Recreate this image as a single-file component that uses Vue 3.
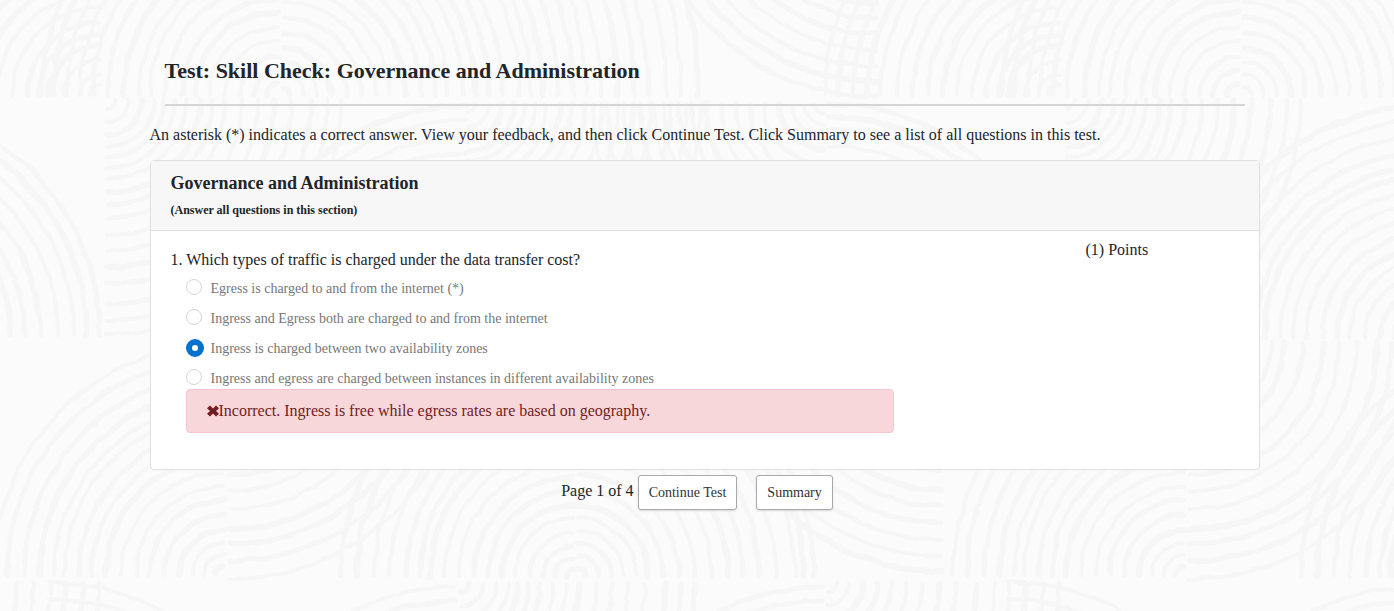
<script setup>
import { ref } from 'vue'

const selected = ref(2)
const options = [
  'Egress is charged to and from the internet (*)',
  'Ingress and Egress both are charged to and from the internet',
  'Ingress is charged between two availability zones',
  'Ingress and egress are charged between instances in different availability zones'
]

// Quarter fans of the backdrop tile: centre, horizontal and vertical direction, ring radii.
const TILE = 960
const small = [8, 22, 35, 47, 57, 68, 79, 93, 105, 118, 135, 151, 167, 184, 204, 220, 234]
const even = [9, 20, 32, 45, 60, 75, 88, 103, 118, 132, 145, 160, 170, 184, 200, 217, 231]
const wide = [7, 20, 33, 47, 62, 77, 92, 106, 121, 137, 151, 164, 179, 192, 205, 219, 236, 247, 259, 274, 289, 302, 317, 334, 351, 364, 382, 397, 414]
const left = [11, 24, 38, 54, 68, 83, 96, 113, 128, 139, 154, 171, 185, 198, 211, 224, 236]
const outer = [12, 27, 43, 57, 70, 81, 94, 113, 129, 148, 164, 181, 198, 214, 229]
const lower = [12, 25, 38, 52, 66, 81, 94, 113, 133, 149, 167, 187, 202, 219, 237]
const fans = [
  [278, 95, -1, -1, left],
  [284, 95, 1, -1, wide],
  [99, 95, -1, -1, [10, 20, 35, 50, 60, 72, 87, 102, 116, 131, 146, 162, 179, 191, 206, 221, 234]],
  [876, -134, -1, 1, [60, 85, 105, 122, 137, 152, 168, 184, 200, 215, 231]],
  [107, 100, 1, 1, small],
  [465, 337, -1, -1, even],
  [467, 104, 1, 1, small],
  [824, 104, -1, 1, even],
  [829, 335, 1, -1, [12, 27, 43, 60, 76, 92, 109, 125, 142, 156, 172, 189, 205, 218, 231]],
  [224, 575, -1, -1, even],
  [230, 342, 1, 1, lower],
  [573, 576, -1, -1, [7, 18, 30, 43, 58, 71, 85, 99, 114, 129, 143, 153, 167, 183, 199, 216, 232]],
  [578, 576, 1, -1, [7, 20, 33, 46, 58, 70, 85, 101, 117, 134, 150, 165, 181, 198, 217, 226, 236]],
  [941, 342, -1, 1, outer],
  [48, 820, 1, -1, [170, 188, 205, 221, 238]],
  [827, 583, 1, 1, [9, 22, 36, 51, 65, 80, 95, 113, 129, 150, 167, 183, 199, 216, 232]],
  [455, 817, -1, -1, [170, 185, 200, 216, 230]],
  [461, 584, 1, 1, small],
  [822, 817, -1, -1, [170, 185, 200, 216, 230]]
]

const strokes = []
for (const shift of [-TILE, 0, TILE]) {
  for (const [cx, cy, dx, dy, radii] of fans) {
    radii.forEach((r, i) => {
      const x = cx + shift
      const sweep = dx * dy > 0 ? 1 : 0
      strokes.push({
        d: `M${x + dx * r} ${cy}A${r} ${r} 0 0 ${sweep} ${x} ${cy + dy * r}`,
        w: [4, 5, 4, 6, 5][(i * 3 + Math.abs(cx)) % 5]
      })
    })
  }
}
</script>

<template>
  <div class="page">
    <svg class="backdrop" aria-hidden="true">
      <filter id="rough" x="0" y="0" width="100%" height="100%">
        <feTurbulence type="fractalNoise" baseFrequency="0.05" numOctaves="2" seed="4" />
        <feDisplacementMap in="SourceGraphic" scale="5" xChannelSelector="R" yChannelSelector="G" />
      </filter>
      <g filter="url(#rough)">
        <path v-for="(s, i) in strokes" :key="i" :d="s.d" :stroke-width="s.w" />
      </g>
    </svg>

    <main class="content">
      <header class="title">
        <h1>Test: Skill Check: Governance and Administration</h1>
      </header>
      <p class="intro">An asterisk (*) indicates a correct answer. View your feedback, and then click Continue Test. Click Summary to see a list of all questions in this test.</p>

      <section class="card">
        <div class="card-head">
          <h2>Governance and Administration</h2>
          <h3>(Answer all questions in this section)</h3>
        </div>
        <div class="card-body">
          <div class="question">
            <p id="q1" class="prompt">1. Which types of traffic is charged under the data transfer cost?</p>
            <div class="answers" role="radiogroup" aria-labelledby="q1">
              <label v-for="(text, i) in options" :key="i" class="option">
                <input v-model="selected" type="radio" name="q1" :value="i" disabled />
                <span>{{ text }}</span>
              </label>
            </div>
            <div class="alert" role="alert">
              <svg class="cross" viewBox="0 0 12 12" aria-hidden="true">
                <path d="M3 .5L6 3.5L9 .5L12 3.2L9 6L12 8.8L9 11.5L6 8.5L3 11.5L0 8.8L3 6L0 3.2Z" />
              </svg>
              <span>Incorrect. Ingress is free while egress rates are based on geography.</span>
            </div>
          </div>
          <div class="points">(1) Points</div>
        </div>
      </section>
    </main>

    <nav class="pager">
      <span class="count">Page 1 of 4</span>
      <button type="button">Continue Test</button>
      <button type="button" class="summary">Summary</button>
    </nav>
  </div>
</template>

<style>
body {
  background: #fbfbfb;
}
</style>

<style scoped>
.page {
  position: relative;
  min-height: 100vh;
  overflow: hidden;
  font: 16px/24px "Liberation Serif", "Times New Roman", serif;
  color: #212529;
}
.page *,
.page {
  box-sizing: border-box;
}
.backdrop {
  position: absolute;
  inset: 0;
  width: 100%;
  height: 100%;
}
.backdrop path {
  fill: none;
  stroke: #f6f6f6;
  stroke-linecap: round;
}
h1,
h2,
h3,
p {
  margin: 0;
}
.content {
  position: relative;
  max-width: 1125px;
  margin: 0 auto;
  padding: 56px 0 0 15px;
}
.title {
  margin: 0 15px;
  padding-bottom: 18px;
  border-bottom: 2px solid #d5d5d5;
}
h1 {
  font-size: 22px;
  line-height: 30px;
}
.intro {
  margin: 17px 0 13px;
}
.card {
  border: 1px solid #dfdfdf;
  border-radius: 4px;
  background: #fff;
}
.card-head {
  padding: 11px 20px 12px;
  border-bottom: 1px solid #dfdfdf;
  background: #f7f7f7;
}
h2 {
  font-size: 18px;
  line-height: 22px;
}
h3 {
  margin-top: 9px;
  font-size: 12px;
  line-height: 15px;
}
.card-body {
  display: grid;
  grid-template-columns: 5fr 1fr;
  padding: 7px 5px 36px;
}
.question {
  padding: 10px 15px 0;
}
.answers {
  display: grid;
  gap: 8px;
  padding: 5px 0 0 15px;
}
.option {
  display: flex;
  align-items: flex-start;
  height: 22px;
  font-size: 14px;
  color: #777;
}
.option input {
  appearance: none;
  flex: none;
  width: 16px;
  height: 16px;
  margin: 2px 9px 0 0;
  border: 1px solid #d5d5d5;
  border-radius: 50%;
  background: #fff;
}
.option input:checked {
  width: 18px;
  height: 18px;
  margin-right: 7px;
  border: 6px solid #0572ce;
}
.alert {
  display: flex;
  align-items: center;
  width: 80%;
  min-height: 44px;
  margin-left: 15px;
  padding: 0 20px;
  border: 1px solid #f5c6cb;
  border-radius: 4px;
  background: #f8d7da;
  color: #721c24;
}
.cross {
  width: 12px;
  height: 12px;
  fill: currentColor;
}
.points {
  padding: 0 15px;
}
.pager {
  position: relative;
  display: flex;
  justify-content: center;
  padding: 5px 0 20px;
}
.count {
  padding-top: 4px;
  margin-right: 4px;
}
button {
  height: 35px;
  padding: 0 10px;
  border: 1px solid #aaa;
  border-radius: 3px;
  background: #fff;
  box-shadow: 0 1px 2px rgba(0, 0, 0, 0.14);
  font: 14px/20px "Liberation Serif", "Times New Roman", serif;
  color: #333;
}
.summary {
  margin-left: 19px;
}
</style>
